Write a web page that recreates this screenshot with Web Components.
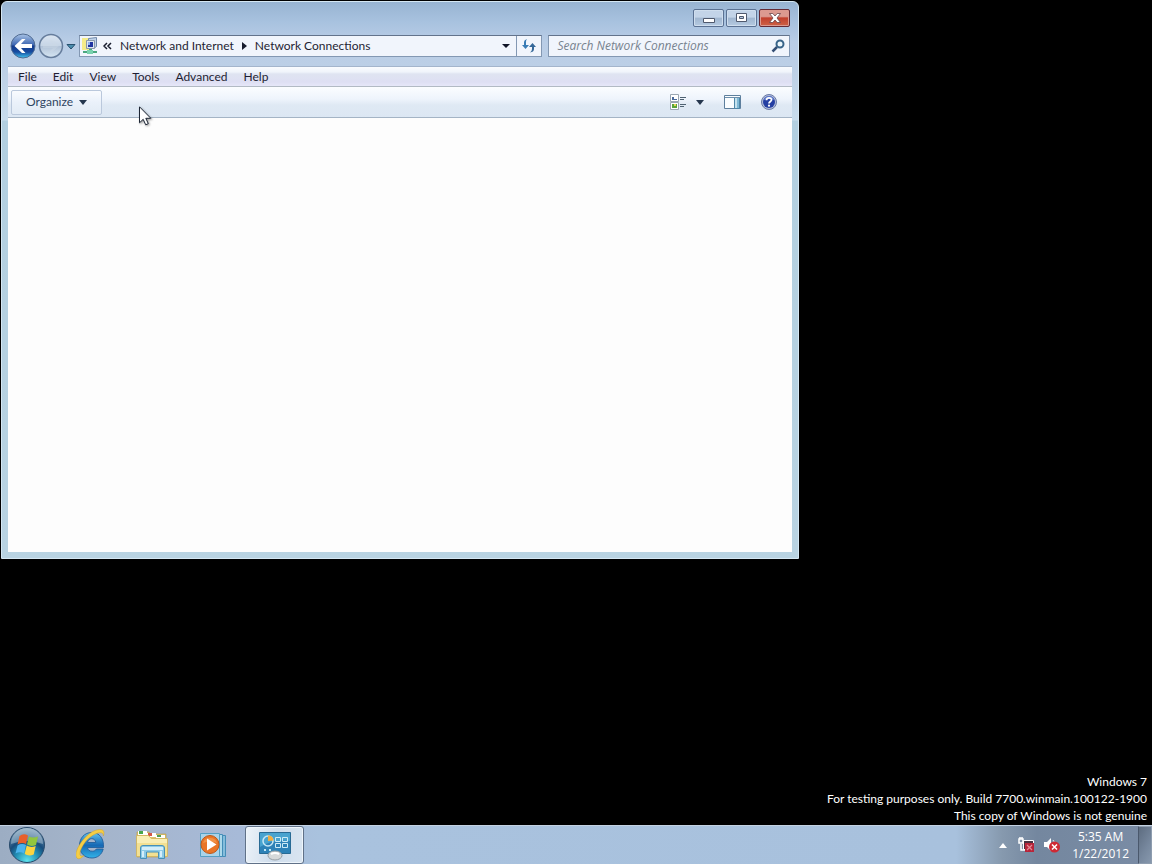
<!DOCTYPE html>
<html lang="en">
<head>
    <meta charset="utf-8">
    <title>Network Connections</title>
    <style>
        html, body {
            height: 100%;
            margin: 0;
        }
        body {
            background: #000;
            color: #1e1e33;
            font: 12px/16px Lato, "Open Sans", sans-serif;
            overflow: hidden;
        }
    </style>
</head>
<body>
    <win-desktop>
        <explorer-window>
            <caption-buttons slot="caption"></caption-buttons>
            <nav-bar slot="nav"></nav-bar>
            <menu-bar slot="menu"></menu-bar>
            <command-bar slot="commands"></command-bar>
        </explorer-window>
        <build-watermark slot="watermark">
            <div>Windows 7</div>
            <div>For testing purposes only. Build 7700.winmain.100122-1900</div>
            <div>This copy of Windows is not genuine</div>
        </build-watermark>
        <task-bar slot="taskbar">
            <task-button label="Internet Explorer">
                <svg width="32" height="32" viewBox="2 1 32 32">
                    <defs>
                        <linearGradient id="ie" x1="0" y1="0" x2="0" y2="1">
                            <stop offset="0" stop-color="#62c4ef"/><stop offset=".5" stop-color="#1668b4"/><stop offset="1" stop-color="#33b4e8"/>
                        </linearGradient>
                    </defs>
                    <path fill="url(#ie)" stroke="#235f9c" stroke-width=".9" d="M29.500 19.500H13.500c.2 2.500 2 3.700 4.700 3.700 2 0 3.400-.7 4.200-2.200h6.800c-1.400 5.500-5.500 9-11.200 9C10.500 30 5.500 25 5.500 17.700 5.500 10 10.500 4.500 17.800 4.500c7.700 0 12.200 6 11.700 15zM13.500 14.500h8.300c-.4-2.600-2-3.800-4.100-3.800-2.300 0-3.800 1.300-4.200 3.800z"/>
                    <path fill="#f5cd45" stroke="#c99a22" stroke-width=".4" d="M3.500 30.500C-1.500 27 6 12 17 4.500c5-3.200 11-4 12.500-1.500.8 1.300.6 3-.2 5 .1-2-.9-3.300-2.500-3.300-3-.3-8.800 2.300-13.300 6.800C8 17.500 4.500 25.500 6.500 27.600c.8.8 2 .6 3.500-.2-2.200 2.700-5 4-6.500 3.100z"/>
                </svg>
            </task-button>
            <task-button label="Windows Explorer">
                <svg width="34" height="32" viewBox="1 0 34 32">
                    <path fill="#dcc06c" stroke="#b99c4a" stroke-width=".6" d="M2 3h12l2 2h15v23H2z"/>
                    <path fill="#fff" d="M3 2h9v4H3zM12 4h9v4h-9zM21 6h9v3h-9z"/>
                    <path fill="#47a64b" d="M4 2h4v3H4z"/><path fill="#d45545" d="M13 4h4v3h-4z"/><path fill="#4f9f56" d="M22 6h4v2h-4z"/>
                    <path fill="#f3e092" stroke="#cfb25b" stroke-width=".8" d="M1.500 6.500h12l3 3h16v18h-31z"/>
                    <path fill="#f9eeb5" d="M2 7h11l3 3h16v4H2z"/>
                    <path fill="#8dcbe6" stroke="#4790b8" d="M5.500 19q0-2.500 2.500-2.500h19q2.500 0 2.500 2.500v10.500h-6V23h-12v6.500h-6z"/>
                    <path fill="#d4eefa" d="M7 18h21v3H7zM7 22h2v6H7zM25 22h2v6h-2z"/>
                </svg>
            </task-button>
            <task-button label="Windows Media Player">
                <svg width="30" height="32" viewBox="1 0 30 32">
                    <path fill="#85bddb" stroke="#448db7" d="M8.500 6.500h19v21h-19z"/>
                    <path fill="#add9ea" stroke="#448db7" d="M5.500 5.500h19v22h-19z"/>
                    <path fill="#a9d3e9" stroke="#549fc4" d="M2.500 4.500h19v23h-19z"/>
                    <circle cx="12" cy="15.500" r="9" fill="#e97527" stroke="#bd5718"/>
                    <path fill="#f7a55c" opacity=".6" d="M5 14a7.300 7 0 0 1 14 0q-7-3-14 0z"/>
                    <path fill="#fff" d="M9 9.500l9.500 6L9 21.500z"/>
                </svg>
            </task-button>
            <task-button label="Network Connections" active>
                <svg width="34" height="32" viewBox="0 0 34 32">
                    <path fill="#2d82b7" stroke="#286a94" d="M1.500 3.500h31v21h-31z"/>
                    <path fill="#48a3cf" d="M2 4h30v8Q15 10 2 18z"/>
                    <circle cx="10" cy="12" r="5" fill="none" stroke="#c6e7f5" stroke-width="1.500"/>
                    <path fill="#f4ac3d" d="M10 12V6.500q5 0 5.500 5z"/>
                    <path fill="none" stroke="#ccebf6" d="M17.500 8.500h5v4h-5zM24.500 8.500h5v4h-5zM17.500 14.500h5v4h-5zM24.500 14.500h5v4h-5z"/>
                    <path fill="#bfe6f5" d="M6 20h2v2H6zM11 20h2v2h-2z"/>
                    <ellipse cx="17" cy="26.500" rx="7" ry="4.500" fill="#d6d9da" stroke="#969fa5"/>
                    <path stroke="#fff" stroke-width="2" d="M13 25q4-2 8 0" fill="none"/>
                </svg>
            </task-button>
        </task-bar>
        <mouse-pointer slot="pointer"></mouse-pointer>
    </win-desktop>

    <script>
        // Attaches an open shadow root filled from the given markup
        function define(name, html) {
            const template = document.createElement('template');
            template.innerHTML = html;

            customElements.define(name, class extends HTMLElement {
                constructor() {
                    super();
                    this.attachShadow({ mode: 'open' });
                    this.shadowRoot.appendChild(template.content.cloneNode(true));
                }
            });
        }

        define('win-desktop', `
            <style>
                :host {
                    display: grid;
                    grid-template-rows: 1fr auto;
                    height: 100vh;
                    position: relative;
                }
                main {
                    display: flex;
                    justify-content: space-between;
                    min-height: 0;
                    padding: 1px;
                }
                .corner {
                    position: absolute;
                    right: 5px;
                    bottom: 40px;
                }
            </style>
            <main><slot></slot></main>
            <div class="corner"><slot name="watermark"></slot></div>
            <slot name="taskbar"></slot>
            <slot name="pointer"></slot>
        `);

        define('explorer-window', `
            <style>
                :host {
                    box-sizing: border-box;
                    display: flex;
                    flex-direction: column;
                    width: 69.300vw;
                    height: 64.600vh;
                    padding: 0 6px 6px;
                    border: 1px solid #d5e7f3;
                    border-radius: 6px 6px 0 0;
                    background: linear-gradient(#98b4d2, #a8c2df 20px, #b9cde6 40px, #bccfe6 64px, #c8dcec 118px, #b2cfe0 119px, #b9d3e2);
                }
                .client {
                    flex: 1;
                    background: #fdfdfd;
                }
            </style>
            <slot name="caption"></slot>
            <slot name="nav"></slot>
            <slot name="menu"></slot>
            <slot name="commands"></slot>
            <div class="client"></div>
        `);

        define('caption-buttons', `
            <style>
                :host {
                    display: flex;
                    justify-content: flex-end;
                    gap: 2px;
                    padding: 7px 2px 5px;
                }
                button {
                    display: grid;
                    place-items: center;
                    box-sizing: border-box;
                    width: 31px;
                    height: 18px;
                    padding: 0;
                    border: 1px solid #5b7293;
                    border-radius: 2px;
                    background: linear-gradient(#c3d4e8 45%, #a0b6d0 50%, #b5cae1);
                    box-shadow: inset 0 0 0 1px #cfdeee;
                }
                .close {
                    border-color: #642a35;
                    background: linear-gradient(#dc9a90 40%, #c2402d 50%, #ce6246);
                    box-shadow: inset 0 0 0 1px #dc9a90;
                }
            </style>
            <button aria-label="Minimize"><svg width="12" height="10"><path fill="#fff" stroke="#4f596d" d="M.5 5.500h11v4H.5z"/></svg></button>
            <button aria-label="Restore"><svg width="12" height="10"><path fill="#fff" stroke="#4f596d" fill-rule="evenodd" d="M.5.500h10v8H.5zM3.500 3.500h4v2h-4z"/></svg></button>
            <button class="close" aria-label="Close"><svg width="12" height="10"><path fill="#fff" stroke="#674348" stroke-width=".8" d="M.5.500h3.300L6 3 8.200.500h3.300L8 5l3.500 4.500H8.200L6 7 3.800 9.500H.5L4 5z"/></svg></button>
        `);

        define('nav-bar', `
            <style>
                :host {
                    display: flex;
                    align-items: center;
                    gap: 6px;
                    height: 28px;
                    padding: 0 2px 6px;
                }
                button, a {
                    font: inherit;
                    color: inherit;
                    text-decoration: none;
                }
                button {
                    display: grid;
                    place-items: center;
                    padding: 0;
                    border: 0;
                    background: none;
                }
                .travel {
                    display: flex;
                    align-items: center;
                    gap: 2px;
                    margin-right: -3px;
                }
                .travel svg {
                    display: block;
                }
                .address, .search {
                    display: flex;
                    align-items: center;
                    box-sizing: border-box;
                    height: 22px;
                    border: 1px solid #8398b3;
                    border-top-color: #63738b;
                    background: #f1f5fc;
                }
                .address {
                    flex: 1;
                    min-width: 0;
                }
                .crumbs {
                    display: flex;
                    align-items: center;
                    flex: 1;
                    gap: 8px;
                    padding-left: 1px;
                    white-space: nowrap;
                }
                .crumbs svg:first-child {
                    margin-right: -4px;
                }
                .chevron {
                    width: 20px;
                    height: 20px;
                }
                .refresh {
                    width: 25px;
                    height: 20px;
                    border-left: 1px solid #8398b3;
                }
                .search {
                    width: 31%;
                    padding: 0 4px 0 8px;
                }
                input {
                    flex: 1;
                    min-width: 0;
                    padding: 0;
                    border: 0;
                    outline: 0;
                    background: none;
                    font: inherit;
                    font-family: "Open Sans", sans-serif;
                    font-style: italic;
                }
                input::placeholder {
                    color: #78838f;
                }
            </style>
            <div class="travel">
                <button aria-label="Back"><svg width="26" height="26" viewBox="0 0 26 26">
                    <defs>
                        <linearGradient id="b" x1="0" y1="0" x2="0" y2="1"><stop offset="0" stop-color="#a9c4e6"/><stop offset=".45" stop-color="#3f68b2"/><stop offset=".5" stop-color="#143b8d"/><stop offset=".75" stop-color="#164b9f"/><stop offset="1" stop-color="#40c5f0"/></linearGradient>
                    </defs>
                    <circle cx="13" cy="13" r="12" fill="url(#b)" stroke="#506b91"/>
                    <path fill="#fff" d="M4.500 13l7.500-7h3.500l-4.500 5h11v4H11l4.500 5H12z"/>
                </svg></button>
                <button aria-label="Forward"><svg width="26" height="26" viewBox="0 0 26 26">
                    <defs>
                        <linearGradient id="f" x1="0" y1="0" x2="0" y2="1"><stop offset="0" stop-color="#dce6f1"/><stop offset=".48" stop-color="#c6d5e6"/><stop offset=".52" stop-color="#b2c3d8"/><stop offset="1" stop-color="#d6e6f3"/></linearGradient>
                    </defs>
                    <circle cx="13" cy="13" r="11.500" fill="url(#f)" stroke="#667d9c" stroke-width="1.500"/>
                    <path fill="#ced9e6" opacity=".4" d="M21 13l-7-6h-3l4 4H5v4h10l-4 4h3z"/>
                </svg></button>
                <button aria-label="Recent pages"><svg width="10" height="7"><path fill="#4b8eae" stroke="#28516f" d="M1 1.500h8L5 6z"/></svg></button>
            </div>
            <div class="address">
                <nav class="crumbs" aria-label="Address">
                    <svg width="18" height="18" viewBox="0 0 18 18">
                        <path fill="#f5ec89" d="M1 1h9v12H1z"/>
                        <path fill="#bfd2e9" stroke="#7189ab" d="M7.500 1.500l8-1v9l-3 2h-5z"/>
                        <path fill="#dce5ef" stroke="#8998aa" d="M5.500 3.500h8v8h-8z"/>
                        <path fill="#1f34a0" d="M7 5h5v5H7z"/><path fill="#8fb0ee" d="M7 5h2v3H7z"/>
                        <path fill="#4ba77f" d="M8 12h3v2h5v2H2v-2h6z"/>
                        <path fill="#79d2ae" d="M6 13h6v4H6z"/>
                    </svg>
                    <svg width="9" height="8"><path fill="none" stroke="#171c2d" stroke-width="1.500" d="M4 1L1 4l3 3M8 1L5 4l3 3"/></svg>
                    <a href="#network">Network and Internet</a>
                    <svg width="5" height="8"><path fill="#171c2d" d="M0 0l5 4-5 4z"/></svg>
                    <a href="#connections">Network Connections</a>
                </nav>
                <button class="chevron" aria-label="Previous locations"><svg width="8" height="4"><path fill="#101527" d="M0 0h8L4 4z"/></svg></button>
                <button class="refresh" aria-label="Refresh"><svg width="14" height="14" viewBox="0 0 14 14">
                    <path fill="#397cb5" d="M0 6h2V3q0-2 3-3-1 1-1 3v3h3l-3.500 4z"/>
                    <path fill="#356899" d="M14 8h-2v2q0 3-4 3.500Q10 12 10 10V8H7l3.500-4z"/>
                </svg></button>
            </div>
            <label class="search">
                <input type="text" placeholder="Search Network Connections" aria-label="Search Network Connections">
                <svg width="14" height="14"><circle cx="9" cy="5" r="3.500" fill="#edf7fc" stroke="#386489" stroke-width="2"/><path stroke="#344f75" stroke-width="2.500" d="M6 8l-4.500 4.500"/></svg>
            </label>
        `);

        define('menu-bar', `
            <style>
                :host {
                    display: flex;
                    height: 19px;
                    padding-left: 2px;
                    border-top: 1px solid #a4b5cc;
                    border-bottom: 1px solid #b2bac4;
                    background: linear-gradient(#fafcfe, #f0f4fb 5px, #dfe4f1 7px, #dedff3 15px, #e6e7f8);
                }
                button {
                    padding: 0 8px;
                    border: 0;
                    background: none;
                    color: inherit;
                    font: inherit;
                }
            </style>
            <button>File</button>
            <button>Edit</button>
            <button>View</button>
            <button>Tools</button>
            <button>Advanced</button>
            <button>Help</button>
        `);

        define('command-bar', `
            <style>
                :host {
                    display: flex;
                    align-items: center;
                    justify-content: space-between;
                    height: 30px;
                    padding: 0 15px 0 3px;
                    border-bottom: 1px solid #a4b4c5;
                    background: linear-gradient(#fbfdff, #eef4fc 12px, #dfe9f4 18px, #dce7f3);
                    color: #2f4562;
                }
                button {
                    display: flex;
                    align-items: center;
                    gap: 6px;
                    padding: 0;
                    border: 0;
                    background: none;
                    color: inherit;
                    font: inherit;
                }
                .organize {
                    height: 25px;
                    padding: 0 14px;
                    border: 1px solid #bac8dc;
                    border-radius: 2px;
                    background: linear-gradient(#f9fbfe, #eaf1fa 50%, #e2ebf5);
                }
                .tools {
                    display: flex;
                    align-items: center;
                    gap: 20px;
                }
                .views {
                    gap: 9px;
                }
            </style>
            <button class="organize">Organize <svg width="8" height="5"><path fill="#25374e" d="M0 0h8L4 5z"/></svg></button>
            <div class="tools">
                <button class="views" aria-label="Change your view">
                    <svg width="17" height="16">
                        <path fill="#fff" stroke="#9aa6b1" d="M.5.500h8v7h-8zM.5 8.500h8v7h-8z"/>
                        <path fill="#48699a" d="M2 3h2v2h3v1H2z"/><path fill="#59a33a" d="M2 10h5v4H2z"/><path fill="#e8d458" d="M4 10h2v2H4z"/>
                        <path stroke="#4f6272" d="M10 3.500h6M10 5.500h4M10 10.500h6M10 12.500h4"/>
                    </svg>
                    <svg width="8" height="5"><path fill="#25374e" d="M0 0h8L4 5z"/></svg>
                </button>
                <button aria-label="Preview pane"><svg width="17" height="15">
                    <path fill="#fafdff" stroke="#5d7f9d" d="M.5.500h16v13H.5z"/>
                    <path fill="#80b9d6" stroke="#4e87a8" d="M10.500 2.500h5v11h-5z"/><path fill="#c5e2ee" d="M11 3h2v10h-2z"/><path stroke="#6d8fac" d="M1 2.500h15"/>
                </svg></button>
                <button aria-label="Help"><svg width="16" height="16">
                    <circle cx="8" cy="8" r="7.500" fill="#b4bed9" stroke="#697aa8"/>
                    <circle cx="8" cy="8" r="6" fill="#253fa3"/><path fill="#718cd9" d="M3 6a5.200 5 0 0 1 10 0q-5-2-10 0z"/>
                    <path fill="none" stroke="#fff" stroke-width="1.800" d="M5.500 6.200C5.500 3 10.700 3.200 10.500 6 10.400 7.500 8 7.500 8 9.500"/><circle cx="8" cy="11.700" r="1.100" fill="#fff"/>
                </svg></button>
            </div>
        `);

        define('build-watermark', `
            <style>
                :host {
                    display: block;
                    color: #fff;
                    line-height: 17px;
                    text-align: right;
                }
            </style>
            <slot></slot>
        `);

        define('task-bar', `
            <style>
                :host {
                    display: flex;
                    align-items: stretch;
                    box-sizing: border-box;
                    height: 39px;
                    border-top: 1px solid #c4d2e2;
                    background: linear-gradient(90deg, #9cadc3, #a4b4ca 90px, #a7bad8 240px, #a9c2de 320px, #a8c1dd 83%, #8699ae 87%, #74879f 90%, #7a8ca5);
                    color: #fff;
                }
                button {
                    padding: 0;
                    border: 0;
                    background: none;
                }
                .start {
                    display: grid;
                    place-items: center;
                    width: 54px;
                    margin-right: 8px;
                }
                .tasks {
                    display: flex;
                    flex: 1;
                    gap: 2px;
                }
                .tray {
                    display: flex;
                    align-items: center;
                    gap: 8px;
                    padding-right: 9px;
                }
                .tray button {
                    display: grid;
                }
                .expand {
                    margin-right: 3px;
                }
                time {
                    margin-left: 4px;
                    font-family: "Open Sans", sans-serif;
                    line-height: 17px;
                    text-align: center;
                }
                .peek {
                    width: 14px;
                    border: 1px solid #8e9daf;
                    border-left-color: #4a586c;
                    background: linear-gradient(120deg, #5d6c80, #77889e 60%, #8798ad);
                }
            </style>
            <button class="start" aria-label="Start"><svg width="38" height="38" viewBox="0 0 38 38">
                <defs>
                    <radialGradient id="o" cx=".5" cy=".95" r=".95"><stop offset="0" stop-color="#5fe3ed"/><stop offset=".35" stop-color="#2390b5"/><stop offset=".6" stop-color="#174c7c"/><stop offset="1" stop-color="#8ba8bf"/></radialGradient>
                </defs>
                <circle cx="19" cy="19" r="17.500" fill="url(#o)" stroke="#284a6b"/>
                <path fill="#d3e2ea" opacity=".4" d="M3 18a16 16 0 0 1 32 0q-16-6-32 0z"/>
                <path fill="#e8602b" d="M11.500 10q4-3 8.500-.5l-2 8.500q-4-2-8.500.5z"/>
                <path fill="#91c63e" d="M21 10.500q4 2 9 0l-2 8.500q-5 2-9-.5z"/>
                <path fill="#4bb3ed" d="M9.500 19.500q4-2.500 8.500-.5l-2 8.500q-4-2.500-8.500 0z"/>
                <path fill="#fbd33f" d="M18.700 19.500q4 2.500 9 .5l-2 8.500q-5 2-9-.5z"/>
            </svg></button>
            <div class="tasks"><slot></slot></div>
            <div class="tray">
                <button class="expand" aria-label="Show hidden icons"><svg width="8" height="5"><path fill="#fff" d="M0 5h8L4 0z"/></svg></button>
                <button aria-label="Network"><svg width="18" height="18" viewBox="0 0 18 18">
                    <path fill="#4a3140" stroke="#fff" d="M5.500 4.500h10v9h-10z"/>
                    <path fill="none" stroke="#fff" stroke-width="1.500" d="M3 8v6h6M1 3h4v4H1zM2 1v2M4 1v2"/>
                    <path fill="#b8253a" d="M7 7h9v9H7z"/><path stroke="#e58b96" stroke-width="1.200" d="M9 9l5 5M14 9l-5 5"/>
                </svg></button>
                <button aria-label="Volume muted"><svg width="16" height="16" viewBox="0 0 16 16">
                    <path fill="#fff" d="M0 5h3l4-4v13l-4-4H0z"/><path fill="none" stroke="#e4e9ef" d="M9 3q2 2 2 5"/>
                    <circle cx="10.500" cy="10" r="5.500" fill="#cf2934"/><path stroke="#fff" stroke-width="1.500" d="M8 7.500l5 5M13 7.500l-5 5"/>
                </svg></button>
                <time datetime="2012-01-22T05:35">5:35 AM<br>1/22/2012</time>
            </div>
            <button class="peek" aria-label="Show desktop"></button>
        `);

        const taskButton = document.createElement('template');
        taskButton.innerHTML = `
            <style>
                :host {
                    display: block;
                }
                button {
                    display: grid;
                    place-items: center;
                    box-sizing: border-box;
                    width: 59px;
                    height: 38px;
                    padding: 0;
                    border: 1px solid transparent;
                    border-radius: 3px;
                    background: none;
                }
                :host([active]) button {
                    border-color: #607188;
                    background: linear-gradient(100deg, #edf3f9, #cfddec 50%, #d9e5f1);
                    box-shadow: inset 0 0 0 1px #eef5fb;
                }
            </style>
            <button><slot></slot></button>
        `;

        class TaskButton extends HTMLElement {
            constructor() {
                super();
                this.attachShadow({ mode: 'open' });
                this.shadowRoot.appendChild(taskButton.content.cloneNode(true));
            }

            connectedCallback() {
                this.shadowRoot.querySelector('button').setAttribute('aria-label', this.getAttribute('label'));
            }
        }

        customElements.define('task-button', TaskButton);

        // The pointer floats over whatever it is on
        define('mouse-pointer', `
            <style>
                :host {
                    position: absolute;
                    left: 139px;
                    top: 106px;
                    pointer-events: none;
                }
                svg {
                    display: block;
                    filter: drop-shadow(1px 1px 1px rgba(0, 0, 0, .4));
                }
            </style>
            <svg width="13" height="20"><path fill="#fff" stroke="#1c2534" d="M.5.800v16l3.700-3.500 2.500 5.500 2.600-1.200-2.500-5.300h5z"/></svg>
        `);
    </script>
</body>
</html>
